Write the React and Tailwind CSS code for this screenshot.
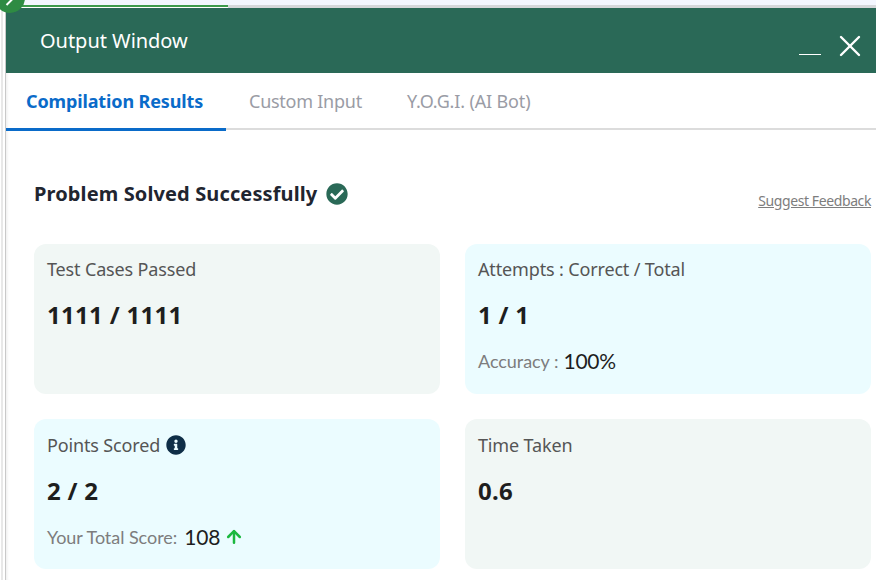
import React from "react";
import { FaCheckCircle, FaInfoCircle } from "react-icons/fa";
import { FiArrowUp, FiX } from "react-icons/fi";

const sans = "font-['Noto_Sans',sans-serif]";

function Card({ title, value, tint, icon, children }) {
  return (
    <div className={`h-[150px] rounded-xl px-[13px] ${tint}`}>
      <div className="flex items-center gap-[6px] h-[26px] text-[18px] tracking-[-0.15px] text-[#555]">
        {title}
        {icon}
      </div>
      <div className="mt-[14px] h-[38px] flex items-center text-[24px] font-bold tracking-[0.3px] text-[#1e1e1e]">
        {value}
      </div>
      {children}
    </div>
  );
}

function SubStat({ label, value, gap, children }) {
  return (
    <div className="mt-[15px] flex items-center h-[24px] font-['Lato',sans-serif]">
      <span className={`text-[18px] tracking-[-0.05px] text-[#7d7d7d] ${gap}`}>{label}</span>
      <span className="text-[21px] tracking-[-0.2px] text-[#1e1e1e]">{value}</span>
      {children}
    </div>
  );
}

export default function App() {
  return (
    <div className={`relative h-[580px] w-[876px] overflow-hidden bg-white ${sans}`}>
      <div className="h-[5px] bg-[#f3f6fe]" />
      <div className="flex h-[3px] ">
        <div className="h-[2px] w-[228px] bg-[#3d9a4b]" />
        <div className="h-[3px] flex-1 bg-[#d5d7da]" />
      </div>
      {/* round badge from the page behind the window */}
      <div className="absolute -left-[5px] -top-[17px] h-[30px] w-[30px] rounded-full bg-[#2e8b43]">
        <svg width="30" height="30" viewBox="0 0 30 30">
          <path d="M11.5 22l5.5-5.5" fill="none" stroke="#fff" strokeWidth="2" />
        </svg>
      </div>
      <div className="flex h-[572px]">
        <div className="w-[6px] shrink-0 border-r border-[#c9c9c9]">
          <div className="ml-[1px] h-full w-[2px] bg-[#e8e8e8]" />
        </div>
        <div className="min-w-0 flex-1 shadow-[inset_3px_0_3px_-2px_rgba(0,0,0,0.08)]">
          <div className="flex h-[65px] items-center justify-between bg-[#2a6957] pl-[34px] pr-[8px]">
            <div className="text-[20px] tracking-[-0.03px] text-white">Output Window</div>
            <div className="flex items-center gap-[11px]">
              <div className="mt-[28px] h-[1px] w-[22px] bg-white" />
              <FiX className="mt-[10px] text-white" size={36} strokeWidth={1.6} />
            </div>
          </div>
          <div className="flex h-[57px] border-b-[2px] border-[#dcdcdc] text-[18px]">
            <div className="h-[58px] w-[220px] shrink-0 border-b-[3px] border-[#0a6bc9] pl-[20px] pt-[15px] font-bold tracking-[-0.13px] text-[#0a6bc9]">
              Compilation Results
            </div>
            <div className="ml-[23px] pt-[15px] tracking-[-0.25px] text-[#9a9ca5]">Custom Input</div>
            <div className="ml-[45px] pt-[15px] tracking-[-0.15px] text-[#9a9ca5]">Y.O.G.I. (AI Bot)</div>
          </div>
          <div className="pl-[28px] pr-[5px]">
            <div className="flex h-[114px] justify-between">
              <div className="flex h-[26px] mt-[51px] items-center gap-[9px] text-[20px] font-bold tracking-[0.12px] text-[#1f2530]">
                Problem Solved Successfully
                <FaCheckCircle className="-mt-[1px] text-[#2a6957]" size={22} />
              </div>
              <a className="mt-[60px] h-[18px] text-[14px] tracking-[-0.4px] text-[#7d7d7d] underline">Suggest Feedback</a>
            </div>
            <div className="grid grid-cols-2 gap-x-[25px] gap-y-[25px]">
              <Card title="Test Cases Passed" value="1111 / 1111" tint="bg-[#f1f7f5] pt-[12px]" />
              <Card title="Attempts : Correct / Total" value="1 / 1" tint="bg-[#ebfcff] pt-[12px]">
                <SubStat label="Accuracy :" value="100%" gap="mr-[5px]" />
              </Card>
              <Card
                title="Points Scored"
                value="2 / 2"
                tint="bg-[#ebfcff] pt-[13px]"
                icon={<FaInfoCircle className="text-[#0f2e47]" size={20} />}
              >
                <SubStat label="Your Total Score:" value="108" gap="mr-[7px]">
                  <FiArrowUp className="ml-[4px] text-[#1bb83f]" size={20} strokeWidth={3} />
                </SubStat>
              </Card>
              <Card title="Time Taken" value="0.6" tint="bg-[#f1f7f5] pt-[13px]" />
            </div>
          </div>
        </div>
      </div>
    </div>
  );
}
